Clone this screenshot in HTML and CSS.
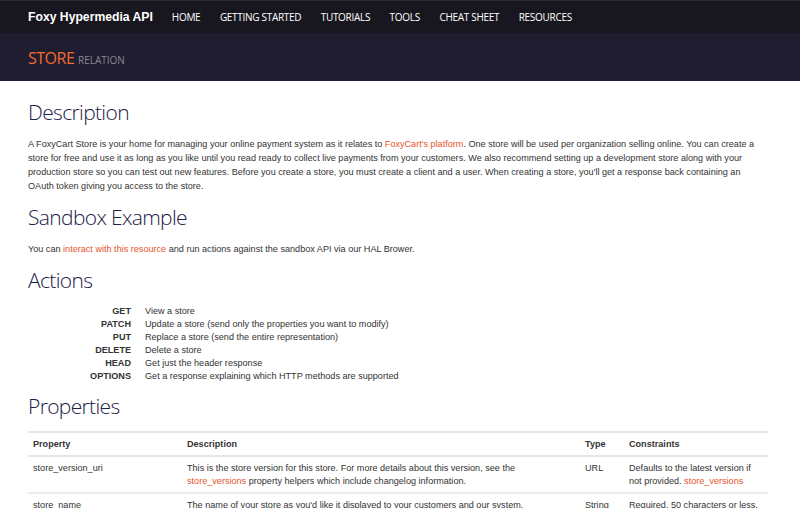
FILE: index.html
```html
<!DOCTYPE html>
<html lang="en">
<head>
  <meta charset="UTF-8">
  <title>Store - Foxy Hypermedia API</title>
  <link rel="stylesheet" href="styles.css">
</head>
<body>
<div class="navbar">
  <div class="container nav-inner">
    <a href="#" class="brand">Foxy Hypermedia API</a>
    <ul class="nav">
      <li><a href="#">HOME</a></li>
      <li><a href="#">GETTING STARTED</a></li>
      <li><a href="#">TUTORIALS</a></li>
      <li><a href="#">TOOLS</a></li>
      <li><a href="#">CHEAT SHEET</a></li>
      <li><a href="#">RESOURCES</a></li>
    </ul>
  </div>
</div>

<div class="banner">
  <div class="container">
    <h1>STORE <small>RELATION</small></h1>
  </div>
</div>

<div class="container content">
  <h2>Description</h2>
  <p>A FoxyCart Store is your home for managing your online payment system as it relates to <a href="#">FoxyCart's platform</a>. One store will be used per organization selling online. You can create a store for free and use it as long as you like until you read ready to collect live payments from your customers. We also recommend setting up a development store along with your production store so you can test out new features. Before you create a store, you must create a client and a user. When creating a store, you'll get a response back containing an OAuth token giving you access to the store.</p>

  <h2>Sandbox Example</h2>
  <p>You can <a href="#">interact with this resource</a> and run actions against the sandbox API via our <a href="#" class="plain">HAL Brower</a>.</p>

  <h2>Actions</h2>
  <dl class="actions">
    <dt>GET</dt><dd>View a store</dd>
    <dt>PATCH</dt><dd>Update a store (send only the properties you want to modify)</dd>
    <dt>PUT</dt><dd>Replace a store (send the entire representation)</dd>
    <dt>DELETE</dt><dd>Delete a store</dd>
    <dt>HEAD</dt><dd>Get just the header response</dd>
    <dt>OPTIONS</dt><dd>Get a response explaining which HTTP methods are supported</dd>
  </dl>

  <h2>Properties</h2>
  <table class="props">
    <thead>
      <tr>
        <th class="c-prop">Property</th>
        <th class="c-desc">Description</th>
        <th class="c-type">Type</th>
        <th>Constraints</th>
      </tr>
    </thead>
    <tbody>
      <tr>
        <td>store_version_uri</td>
        <td>This is the store version for this store. For more details about this version, see the <a href="#">store_versions</a> property helpers which include changelog information.</td>
        <td>URL</td>
        <td>Defaults to the latest version if not provided. <a href="#">store_versions</a></td>
      </tr>
      <tr>
        <td>store_name</td>
        <td>The name of your store as you'd like it displayed to your customers and our system.</td>
        <td>String</td>
        <td>Required. 50 characters or less.</td>
      </tr>
    </tbody>
  </table>
</div>
</body>
</html>
```

FILE: styles.css
```css
body {
  margin: 0;
  font-family: "Liberation Sans", Arial, sans-serif;
  font-size: 9.1px;
  line-height: 14px;
  color: #333;
  background: #fff;
}
a {
  color: #e8542b;
  text-decoration: none;
}
a.plain {
  color: #333;
}
.container {
  margin: 0 32px 0 28px;
}

/* top bar */
.navbar {
  height: 33px;
  background-color: #18171f;
  border-top: 1px solid #2b2a33;
  box-sizing: border-box;
}
.nav-inner {
  display: flex;
  align-items: center;
  height: 32px;
}
.brand {
  color: #fff;
  font-weight: bold;
  font-size: 12.2px;
  margin-right: 19px;
}
.nav {
  display: flex;
  list-style: none;
  margin: 0;
  padding: 0;
}
.nav li a {
  display: block;
  color: #fff;
  font-family: "Open Sans", sans-serif;
  font-size: 10px;
  letter-spacing: -0.3px;
  margin-right: 19.5px;
}

/* page title */
.banner {
  height: 48px;
  background-color: #211d31;
  display: flex;
  align-items: center;
}
.banner h1 {
  margin: 3px 0 0;
  font-family: "Open Sans", sans-serif;
  font-weight: normal;
  font-size: 16px;
  color: #f26b2d;
  letter-spacing: -0.5px;
}
.banner h1 small {
  font-size: 10px;
  color: #8a8796;
  letter-spacing: 0;
}

/* content */
.content h2 {
  font-family: "Open Sans", sans-serif;
  font-weight: 300;
  font-size: 21px;
  letter-spacing: -0.65px;
  line-height: 28px;
  color: #1b2045;
  margin: 9px 0 11px;
}
.content h2:first-child {
  margin-top: 17px;
}
.content p {
  margin: 0 0 10px;
}

.actions {
  display: grid;
  grid-template-columns: 103px 1fr;
  column-gap: 14px;
  margin: 11px 0 7px;
  line-height: 13px;
}
.actions dt {
  text-align: right;
  font-weight: bold;
}
.actions dd {
  margin: 0;
}

.props {
  width: 740px;
  border-collapse: collapse;
  border-top: 2px solid #e6e6e6;
  margin-top: 5px;
  line-height: 13px;
}
.props th {
  text-align: left;
  padding: 5px 5px 4px;
  border-bottom: 2px solid #e6e6e6;
}
.props td {
  vertical-align: top;
  padding: 5px 5px 4px;
  border-bottom: 2px solid #ececec;
}
.c-prop { width: 144px; }
.c-desc { width: 388px; }
.c-type { width: 34px; }
```
